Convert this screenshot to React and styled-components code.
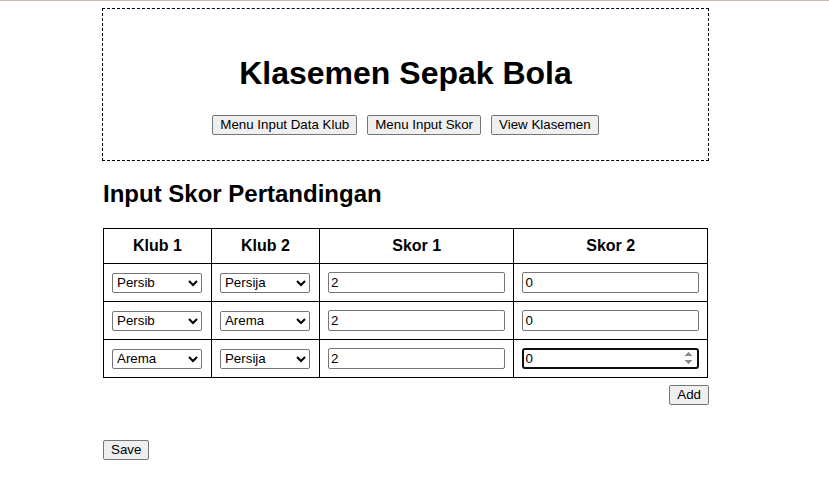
import React from "react";
import styled, { createGlobalStyle } from "styled-components";

const Global = createGlobalStyle`
  html, body { margin: 0; padding: 0; background: #fff; }
  body {
    font-family: "Liberation Sans", Arial, sans-serif;
    color: #000;
    border-top: 1px solid #c9b9b3;
  }
`;

const Page = styled.div`
  width: 607px;
  margin: 7px 0 0 102px;
`;

const HeaderBox = styled.header`
  border: 1px dashed #000;
  padding: 25px 0 25px;
  display: flex;
  flex-direction: column;
  align-items: center;
`;

const Title = styled.h1`
  font-size: 32px;
  font-weight: bold;
  margin: 21px 0 23px;
  line-height: 37px;
`;

const Nav = styled.nav`
  display: flex;
  gap: 10px;
  justify-content: center;
`;

const Btn = styled.button`
  font-family: "Liberation Sans", Arial, sans-serif;
  font-size: 13.33px;
  background: #efefef;
  border: 1px solid #767676;
  border-radius: 2px;
  padding: 1px 7px;
  height: 20px;
  line-height: 16px;
  color: #000;
`;

const SectionTitle = styled.h2`
  font-size: 24px;
  font-weight: bold;
  margin: 19px 0 20px 1px;
  line-height: 28px;
`;

const Table = styled.table`
  border-collapse: collapse;
  margin-left: 1px;
  width: 605px;
`;

const Th = styled.th`
  border: 1px solid #000;
  padding: 8px;
  font-size: 16px;
  font-weight: bold;
  text-align: center;
  height: 18px;
  width: ${(p) => p.$w}px;
`;

const Td = styled.td`
  border: 1px solid #000;
  padding: 8px;
  height: 21px;
`;

const Select = styled.select`
  font-family: "Liberation Sans", Arial, sans-serif;
  font-size: 13.33px;
  width: 90px;
  height: 20px;
  display: block;
  border: 1px solid #767676;
  border-radius: 2px;
  background: #fff;
  color: #000;
`;

const NumInput = styled.input`
  font-family: "Liberation Sans", Arial, sans-serif;
  font-size: 13.33px;
  width: 100%;
  box-sizing: border-box;
  height: 21px;
  display: block;
  border: 1px solid #767676;
  border-radius: 2px;
  padding: 1px 2px;
  color: #000;
  &:focus {
    outline: none;
    border: 2px solid #101010;
    border-radius: 3px;
    padding: 0 1px;
  }
`;

const AddRow = styled.div`
  display: flex;
  justify-content: flex-end;
  margin: 7px 0 0;
`;

const SaveRow = styled.div`
  margin: 35px 0 0 1px;
`;

const rows = [
  ["Persib", "Persija", "2", "0"],
  ["Persib", "Arema", "2", "0"],
  ["Arema", "Persija", "2", "0"],
];

const clubs = ["Persib", "Persija", "Arema"];

export default function App() {
  return (
    <>
      <Global />
      <Page>
        <HeaderBox>
          <Title>Klasemen Sepak Bola</Title>
          <Nav>
            <Btn>Menu Input Data Klub</Btn>
            <Btn>Menu Input Skor</Btn>
            <Btn>View Klasemen</Btn>
          </Nav>
        </HeaderBox>
        <SectionTitle>Input Skor Pertandingan</SectionTitle>
        <Table>
          <thead>
            <tr>
              <Th $w={91}>Klub 1</Th>
              <Th $w={91}>Klub 2</Th>
              <Th $w={178}>Skor 1</Th>
              <Th $w={177}>Skor 2</Th>
            </tr>
          </thead>
          <tbody>
            {rows.map((r, i) => (
              <tr key={i}>
                <Td>
                  <Select defaultValue={r[0]}>
                    {clubs.map((c) => (
                      <option key={c}>{c}</option>
                    ))}
                  </Select>
                </Td>
                <Td>
                  <Select defaultValue={r[1]}>
                    {clubs.map((c) => (
                      <option key={c}>{c}</option>
                    ))}
                  </Select>
                </Td>
                <Td>
                  <NumInput type="number" defaultValue={r[2]} />
                </Td>
                <Td>
                  <NumInput type="number" defaultValue={r[3]} autoFocus={i === 2} />
                </Td>
              </tr>
            ))}
          </tbody>
        </Table>
        <AddRow>
          <Btn>Add</Btn>
        </AddRow>
        <SaveRow>
          <Btn>Save</Btn>
        </SaveRow>
      </Page>
    </>
  );
}
